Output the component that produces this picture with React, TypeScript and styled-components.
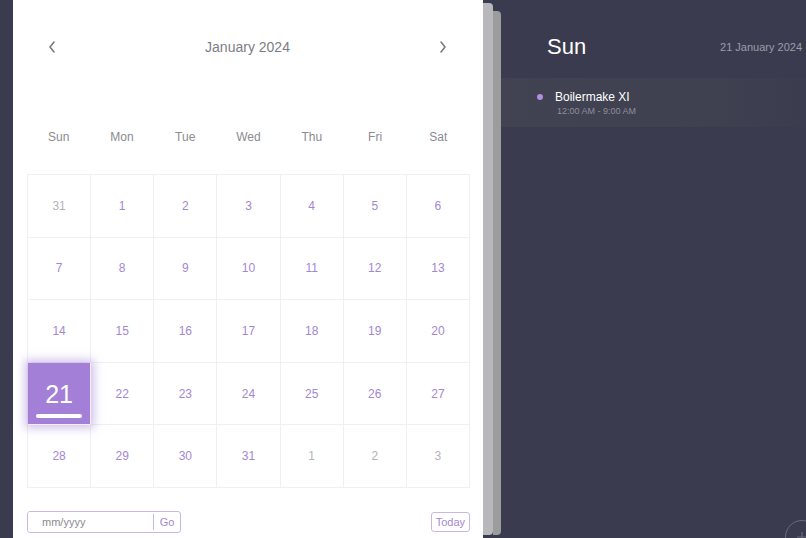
import React from 'react';
import styled, { createGlobalStyle } from 'styled-components';

const GlobalStyle = createGlobalStyle`
  html, body {
    margin: 0;
    padding: 0;
    background: #3a3b4e;
    font-family: "Liberation Sans", Arial, sans-serif;
  }
`;

const Page = styled.div`
  position: relative;
  display: flex;
  height: 538px;
  width: 806px;
  overflow: hidden;
  background: #3a3b4e;
  padding-left: 13px;
  box-sizing: border-box;
`;

const CalendarPanel = styled.div`
  width: 470px;
  flex-shrink: 0;
  background: #ffffff;
  display: flex;
  flex-direction: column;
  padding: 0 13px 0 14px;
  box-sizing: border-box;
`;

const Sheet = styled.div<{ $top: number; $width: number; $color: string }>`
  width: ${(p) => p.$width}px;
  flex-shrink: 0;
  margin-top: ${(p) => p.$top}px;
  margin-bottom: 3px;
  background: ${(p) => p.$color};
  border-radius: 0 4px 4px 0;
`;

const Header = styled.div`
  height: 94px;
  display: flex;
  align-items: center;
  justify-content: space-between;
  padding: 0 20px 0 18px;
`;

const Title = styled.div`
  font-size: 14px;
  color: #7d7d85;
`;

const Arrow = styled.button`
  border: none;
  background: none;
  padding: 0;
  width: 14px;
  height: 14px;
  display: flex;
  align-items: center;
  justify-content: center;
  cursor: pointer;
`;

const WeekRow = styled.div`
  height: 80px;
  padding-top: 6px;
  box-sizing: border-box;
  display: grid;
  grid-template-columns: repeat(7, 1fr);
  align-items: center;
`;

const WeekDay = styled.div`
  text-align: center;
  font-size: 12px;
  color: #8b8b90;
`;

const Grid = styled.div`
  display: grid;
  grid-template-columns: repeat(7, 1fr);
  grid-template-rows: repeat(5, 62.6px);
  border-top: 1px solid #f0eff3;
  border-left: 1px solid #f0eff3;
`;

const Cell = styled.div<{ $muted?: boolean; $selected?: boolean }>`
  position: relative;
  display: flex;
  flex-direction: column;
  align-items: center;
  justify-content: center;
  border-right: 1px solid #f0eff3;
  border-bottom: 1px solid #f0eff3;
  font-size: ${(p) => (p.$selected ? '25px' : '12px')};
  color: ${(p) => (p.$selected ? '#ffffff' : p.$muted ? '#b3b3b8' : '#a487d0')};
  background: ${(p) => (p.$selected ? '#a47fd7' : '#ffffff')};
  box-shadow: ${(p) => (p.$selected ? '0 0 9px 3px rgba(164, 127, 215, 0.5)' : 'none')};
  z-index: ${(p) => (p.$selected ? 1 : 0)};
`;

const SelectedBar = styled.span`
  display: block;
  width: 46px;
  height: 4px;
  border-radius: 2px;
  background: #ffffff;
  margin-top: 5px;
  margin-bottom: -10px;
`;

const Footer = styled.div`
  margin-top: 23px;
  display: flex;
  justify-content: space-between;
  align-items: center;
`;

const MonthForm = styled.div`
  display: flex;
  width: 154px;
  height: 22px;
  border: 1px solid #c9b7e6;
  border-radius: 3px;
  box-sizing: border-box;
  overflow: hidden;
`;

const MonthInput = styled.input`
  flex: 1;
  min-width: 0;
  border: none;
  outline: none;
  padding: 0 0 0 14px;
  font-family: inherit;
  font-size: 11px;
  color: #555;
  &::placeholder {
    color: #8a8a90;
  }
`;

const GoButton = styled.button`
  border: none;
  border-left: 1px solid #c9b7e6;
  background: #fff;
  color: #a487d0;
  font-family: inherit;
  font-size: 11px;
  width: 27px;
  padding: 0;
  margin: 2px 0;
`;

const TodayButton = styled.button`
  height: 20px;
  padding: 0 4px;
  border: 1px solid #c9b7e6;
  border-radius: 3px;
  background: #fff;
  color: #a487d0;
  font-family: inherit;
  font-size: 11px;
`;

const DayPanel = styled.div`
  flex: 1;
  display: flex;
  flex-direction: column;
  background: #3a3b4e;
`;

const DayHeader = styled.div`
  height: 78px;
  display: flex;
  align-items: flex-start;
  justify-content: space-between;
  padding: 33px 4px 0 46px;
  box-sizing: border-box;
`;

const DayName = styled.div`
  font-size: 22px;
  color: #ffffff;
  line-height: 28px;
`;

const DayDate = styled.div`
  font-size: 11px;
  color: #9b9cab;
  line-height: 28px;
`;

const EventRow = styled.div`
  height: 49px;
  display: flex;
  align-items: flex-start;
  padding: 12px 0 0 36px;
  box-sizing: border-box;
  background: linear-gradient(90deg, #424352 0%, #404150 60%, #3b3c4f 100%);
`;

const Dot = styled.span`
  width: 6px;
  height: 6px;
  border-radius: 50%;
  background: #b08ee0;
  margin-top: 4px;
  margin-right: 12px;
`;

const EventText = styled.div`
  display: flex;
  flex-direction: column;
`;

const EventName = styled.div`
  font-size: 12px;
  color: #ffffff;
  line-height: 14px;
`;

const EventTime = styled.div`
  font-size: 9px;
  color: #8d8e9c;
  margin-top: 2px;
  margin-left: 2px;
`;

const AddButton = styled.div`
  position: absolute;
  left: 785px;
  top: 520px;
  width: 34px;
  height: 34px;
  border-radius: 50%;
  border: 1px solid #6a6b7c;
  box-sizing: border-box;
  display: flex;
  align-items: center;
  justify-content: center;
`;

const Chevron = ({ dir }: { dir: 'left' | 'right' }) => (
  <svg width="10" height="14" viewBox="0 0 10 14" fill="none">
    <path
      d={dir === 'left' ? 'M7 2 L3 7 L7 12' : 'M3 2 L7 7 L3 12'}
      stroke="#7a7a80"
      strokeWidth="1.6"
      strokeLinecap="round"
      strokeLinejoin="round"
    />
  </svg>
);

const weekDays = ['Sun', 'Mon', 'Tue', 'Wed', 'Thu', 'Fri', 'Sat'];

// january 2024 starts on a monday
const days: { n: number; muted: boolean }[] = [
  { n: 31, muted: true },
  ...Array.from({ length: 31 }, (_, i) => ({ n: i + 1, muted: false })),
  { n: 1, muted: true },
  { n: 2, muted: true },
  { n: 3, muted: true },
];

export default function App() {
  return (
    <>
      <GlobalStyle />
      <Page>
        <CalendarPanel>
          <Header>
            <Arrow><Chevron dir="left" /></Arrow>
            <Title>January 2024</Title>
            <Arrow><Chevron dir="right" /></Arrow>
          </Header>
          <WeekRow>
            {weekDays.map((d) => (
              <WeekDay key={d}>{d}</WeekDay>
            ))}
          </WeekRow>
          <Grid>
            {days.map((d, i) => {
              const selected = !d.muted && d.n === 21;
              return (
                <Cell key={i} $muted={d.muted} $selected={selected}>
                  {d.n}
                  {selected && <SelectedBar />}
                </Cell>
              );
            })}
          </Grid>
          <Footer>
            <MonthForm>
              <MonthInput placeholder="mm/yyyy" />
              <GoButton>Go</GoButton>
            </MonthForm>
            <TodayButton>Today</TodayButton>
          </Footer>
        </CalendarPanel>
        <Sheet $top={3} $width={10} $color="#b8b8bc" />
        <Sheet $top={11} $width={8} $color="#9c9c9c" />
        <DayPanel>
          <DayHeader>
            <DayName>Sun</DayName>
            <DayDate>21 January 2024</DayDate>
          </DayHeader>
          <EventRow>
            <Dot />
            <EventText>
              <EventName>Boilermake XI</EventName>
              <EventTime>12:00 AM - 9:00 AM</EventTime>
            </EventText>
          </EventRow>
        </DayPanel>
        <AddButton>
          <svg width="12" height="12" viewBox="0 0 12 12">
            <path d="M6 1 V11 M1 6 H11" stroke="#6a6b7c" strokeWidth="1.2" />
          </svg>
        </AddButton>
      </Page>
    </>
  );
}
